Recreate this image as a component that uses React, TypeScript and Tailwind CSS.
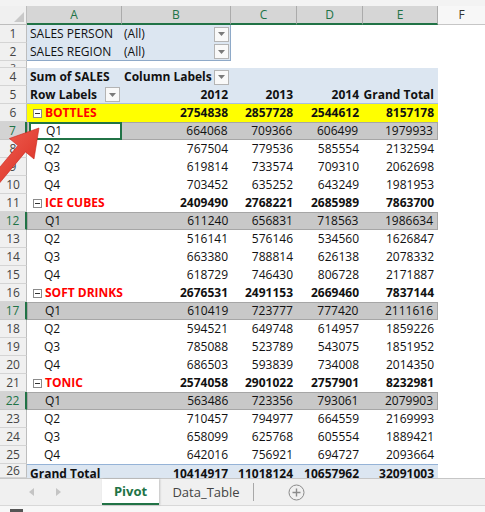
import React from "react";

// pivot data: category rows followed by their four quarters
type PivotRow = {
  kind: "cat" | "q";
  label: string;
  vals: string[];
};

const DATA: PivotRow[] = [
  { kind: "cat", label: "BOTTLES", vals: ["2754838", "2857728", "2544612", "8157178"] },
  { kind: "q", label: "Q1", vals: ["664068", "709366", "606499", "1979933"] },
  { kind: "q", label: "Q2", vals: ["767504", "779536", "585554", "2132594"] },
  { kind: "q", label: "Q3", vals: ["619814", "733574", "709310", "2062698"] },
  { kind: "q", label: "Q4", vals: ["703452", "635252", "643249", "1981953"] },
  { kind: "cat", label: "ICE CUBES", vals: ["2409490", "2768221", "2685989", "7863700"] },
  { kind: "q", label: "Q1", vals: ["611240", "656831", "718563", "1986634"] },
  { kind: "q", label: "Q2", vals: ["516141", "576146", "534560", "1626847"] },
  { kind: "q", label: "Q3", vals: ["663380", "788814", "626138", "2078332"] },
  { kind: "q", label: "Q4", vals: ["618729", "746430", "806728", "2171887"] },
  { kind: "cat", label: "SOFT DRINKS", vals: ["2676531", "2491153", "2669460", "7837144"] },
  { kind: "q", label: "Q1", vals: ["610419", "723777", "777420", "2111616"] },
  { kind: "q", label: "Q2", vals: ["594521", "649748", "614957", "1859226"] },
  { kind: "q", label: "Q3", vals: ["785088", "523789", "543075", "1851952"] },
  { kind: "q", label: "Q4", vals: ["686503", "593839", "734008", "2014350"] },
  { kind: "cat", label: "TONIC", vals: ["2574058", "2901022", "2757901", "8232981"] },
  { kind: "q", label: "Q1", vals: ["563486", "723356", "793061", "2079903"] },
  { kind: "q", label: "Q2", vals: ["710457", "794977", "664559", "2169993"] },
  { kind: "q", label: "Q3", vals: ["658099", "625768", "605554", "1889421"] },
  { kind: "q", label: "Q4", vals: ["642016", "756921", "694727", "2093664"] },
];

const SELECTED = [7, 12, 17, 22];

function RowNum({ n, selected }: { n: number; selected?: boolean }) {
  return (
    <div
      className={
        selected
          ? "w-[27px] shrink-0 flex items-center justify-center bg-[#d3d3d3] text-[#217346] border-b border-[#c6c6c6] border-r-2 border-r-[#217346]"
          : "w-[27px] shrink-0 flex items-center justify-center bg-[#f0f0f0] text-[#444] border-b border-[#d4d4d4] border-r border-r-[#bdbdbd]"
      }
    >
      {n}
    </div>
  );
}

function Dropdown() {
  return (
    <span className="w-[15px] h-[15px] shrink-0 border border-[#b4b4b4] bg-[#f9f9f9] flex items-center justify-center">
      <svg width="7" height="4" viewBox="0 0 7 4">
        <path d="M0 0h7L3.5 4z" fill="#7a7a7a" />
      </svg>
    </span>
  );
}

function Collapse() {
  return (
    <svg width="9" height="9" viewBox="0 0 9 9" className="shrink-0 mr-[3px]">
      <rect x="0.5" y="0.5" width="8" height="8" fill="white" stroke="#8a8a8a" />
      <path d="M2 4.5h5" stroke="#333" />
    </svg>
  );
}

function HeadCell({ label, w }: { label: string; w: string }) {
  return (
    <div className={`${w} shrink-0 flex items-center justify-center bg-[#d6d6d6] text-[#217346] border-r border-[#ababab] border-b-2 border-b-[#217346]`}>
      {label}
    </div>
  );
}

export default function App() {
  return (
    <div className="relative w-[485px] h-[512px] overflow-hidden bg-white font-['Open_Sans',sans-serif] text-[12px] text-[#111] leading-none whitespace-nowrap">
      {/* column headers */}
      <div className="h-[6px] bg-[#f3f3f3]" />
      <div className="flex h-[19px]">
        <div className="w-[27px] shrink-0 bg-[#f0f0f0] border-r border-b border-[#bdbdbd] flex items-end justify-end p-[2px]">
          <svg width="10" height="10" viewBox="0 0 10 10">
            <path d="M10 0v10H0z" fill="#c9c9c9" />
          </svg>
        </div>
        <HeadCell label="A" w="w-[95px]" />
        <HeadCell label="B" w="w-[109px]" />
        <HeadCell label="C" w="w-[66px]" />
        <HeadCell label="D" w="w-[66px]" />
        <HeadCell label="E" w="w-[75px]" />
        <div className="flex-1 flex items-center justify-center bg-[#f7f7f7] text-[#333] border-b border-[#c6c6c6]">F</div>
      </div>

      {/* report filters */}
      {[
        { n: 1, label: "SALES PERSON" },
        { n: 2, label: "SALES REGION" },
      ].map((r) => (
        <div key={r.n} className="flex h-[18px]">
          <RowNum n={r.n} />
          <div
            className={`flex w-[204px] bg-[#dce6f1] border-r border-[#8ea9c8] ${r.n === 2 ? "border-b" : ""}`}
          >
            <div className="w-[95px] flex items-center pl-[3px]">{r.label}</div>
            <div className="flex-1 flex items-center pl-[2px] pr-[1px] justify-between">
              <span>(All)</span>
              <Dropdown />
            </div>
          </div>
        </div>
      ))}
      <div className="flex h-[7px] overflow-hidden">
        <div className="w-[27px] shrink-0 h-[7px] overflow-hidden bg-[#f0f0f0] border-r border-[#bdbdbd] border-b border-b-[#d4d4d4] text-[#444] text-center text-[10px] pt-[2px]">3</div>
      </div>

      {/* pivot header */}
      <div className="flex h-[18px]">
        <RowNum n={4} />
        <div className="flex w-[411px] bg-[#dce6f1] font-bold">
          <div className="w-[95px] flex items-center pl-[3px]">Sum of SALES</div>
          <div className="w-[109px] flex items-center justify-between pl-[2px] pr-[2px]">
            <span>Column Labels</span>
            <Dropdown />
          </div>
        </div>
      </div>
      <div className="flex h-[18px]">
        <RowNum n={5} />
        <div className="flex w-[411px] bg-[#dce6f1] font-bold border-b border-[#a9c0dc]">
          <div className="w-[95px] flex items-center justify-between pl-[3px] pr-[2px]">
            <span>Row Labels</span>
            <Dropdown />
          </div>
          <div className="w-[109px] flex items-center justify-end pr-[3px]">2012</div>
          <div className="w-[66px] flex items-center justify-end pr-[4px]">2013</div>
          <div className="w-[66px] flex items-center justify-end pr-[4px]">2014</div>
          <div className="w-[75px] flex items-center justify-end pr-[4px]">Grand Total</div>
        </div>
      </div>

      {/* body */}
      {DATA.map((r, i) => {
        const n = 6 + i;
        const sel = SELECTED.includes(n);
        const cat = r.kind === "cat";
        const bg = n === 6 ? "bg-[#ffff00]" : sel ? "bg-[#c8c8c8] border border-[#a6a6a6]" : "bg-white";
        return (
          <div key={n} className="flex h-[18px]">
            <RowNum n={n} selected={sel} />
            <div className={`flex w-[411px] ${bg} ${cat ? "font-bold" : ""}`}>
              {n === 7 ? (
                <div className="w-[93px] ml-[1px] my-[-1px] bg-white border-2 border-[#217346] flex items-center pl-[15px]">
                  {r.label}
                </div>
              ) : (
                <div className="w-[95px] shrink-0 flex items-center pl-[6px]">
                  {cat ? (
                    <>
                      <Collapse />
                      <span className="text-[#f00]">{r.label}</span>
                    </>
                  ) : (
                    <span className="pl-[11px]">{r.label}</span>
                  )}
                </div>
              )}
              <div className="w-[109px] flex items-center justify-end pr-[3px]">{r.vals[0]}</div>
              <div className="w-[66px] flex items-center justify-end pr-[4px]">{r.vals[1]}</div>
              <div className="w-[66px] flex items-center justify-end pr-[4px]">{r.vals[2]}</div>
              <div className="w-[75px] flex items-center justify-end pr-[4px]">{r.vals[3]}</div>
            </div>
          </div>
        );
      })}

      {/* grand total, cut by the sheet tabs */}
      <div className="flex h-[14px] overflow-hidden">
        <RowNum n={26} />
        <div className="flex w-[411px] bg-[#dce6f1] font-bold border-t border-[#95b3d7] pt-[4px]">
          <div className="w-[95px] flex items-center pl-[3px]">Grand Total</div>
          <div className="w-[109px] flex items-center justify-end pr-[3px]">10414917</div>
          <div className="w-[66px] flex items-center justify-end pr-[4px]">11018124</div>
          <div className="w-[66px] flex items-center justify-end pr-[4px]">10657962</div>
          <div className="w-[75px] flex items-center justify-end pr-[4px]">32091003</div>
        </div>
      </div>

      {/* sheet tabs */}
      <div className="flex h-[27px] bg-[#f0f0f0] border-t border-[#c6c6c6] text-[13px]">
        <div className="w-[102px] flex items-center gap-[22px] pl-[29px]">
          <svg width="5" height="8" viewBox="0 0 5 8">
            <path d="M5 0v8L0 4z" fill="#c4c4c4" />
          </svg>
          <svg width="5" height="8" viewBox="0 0 5 8">
            <path d="M0 0v8l5-4z" fill="#c4c4c4" />
          </svg>
        </div>
        <div className="w-[57px] bg-white flex items-center justify-center font-bold text-[#217346] border-b-2 border-[#217346] shadow-[1px_0_2px_rgba(0,0,0,0.2)]">
          Pivot
        </div>
        <div className="w-[94px] flex items-center justify-center text-[#444]">Data_Table</div>
        <div className="w-px bg-[#a8a8a8] my-[4px]" />
        <div className="w-[84px] flex items-center justify-center">
          <svg width="17" height="17" viewBox="0 0 17 17">
            <circle cx="8.5" cy="8.5" r="7.5" fill="none" stroke="#8a8a8a" />
            <path d="M8.5 4.5v8M4.5 8.5h8" stroke="#8a8a8a" strokeWidth="1.4" />
          </svg>
        </div>
      </div>
      <div className="h-[7px] bg-[#f7f7f7] border-t border-[#d8d8d8] pl-[10px]">
        <div className="w-[13px] h-[3px] mt-[3px] bg-[#555]" />
      </div>

      {/* red call-out arrow */}
      <svg className="absolute left-0 top-0 pointer-events-none" width="485" height="512" viewBox="0 0 485 512">
        <defs>
          <linearGradient id="arr" x1="0" y1="0" x2="1" y2="1">
            <stop offset="0" stopColor="#f26a5a" />
            <stop offset="1" stopColor="#d8261d" />
          </linearGradient>
        </defs>
        <polygon
          points="39,128 34,159 25.5,151.9 -8.4,192.6 -16,186.2 17.9,145.5 9.4,138.5"
          fill="url(#arr)"
          stroke="#c9231b"
          strokeWidth="0.6"
        />
      </svg>
    </div>
  );
}
